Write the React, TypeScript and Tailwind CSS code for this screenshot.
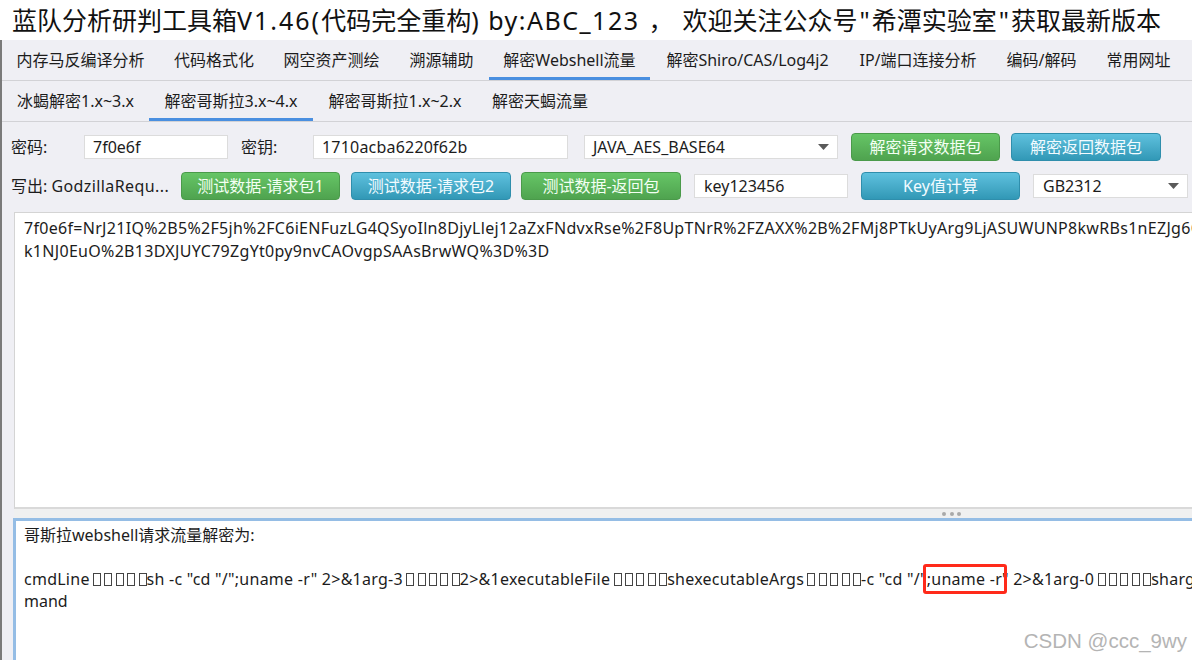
import React from 'react';

const mainTabs = [
  { label: '内存马反编译分析', w: 'w-[157px]' },
  { label: '代码格式化', w: 'w-[110px]' },
  { label: '网空资产测绘', w: 'w-[125px]' },
  { label: '溯源辅助', w: 'w-[95px]' },
  { label: '解密Webshell流量', w: 'w-[161px]', active: true },
  { label: '解密Shiro/CAS/Log4j2', w: 'w-[195px]' },
  { label: 'IP/端口连接分析', w: 'w-[146px]' },
  { label: '编码/解码', w: 'w-[101px]' },
  { label: '常用网址', w: 'w-[93px]' },
];

const subTabs = [
  { label: '冰蝎解密1.x~3.x', w: 'w-[147px]' },
  { label: '解密哥斯拉3.x~4.x', w: 'w-[164px]', active: true },
  { label: '解密哥斯拉1.x~2.x', w: 'w-[164px]' },
  { label: '解密天蝎流量', w: 'w-[126px]' },
];

// the missing-glyph boxes in the decoded output
const Tofu: React.FC<{ n?: number }> = ({ n = 5 }) => (
  <>
    {Array.from({ length: n }).map((_, i) => (
      <span key={i} className="inline-block w-[8px] h-[13px] border border-[#444] ml-[3.4px] align-[-1px]" />
    ))}
  </>
);

const Arrow = () => (
  <svg width="11" height="6" viewBox="0 0 11 6" className="shrink-0">
    <path d="M0 0 L11 0 L5.5 6 Z" fill="#5a5a5a" />
  </svg>
);

const GreenBtn: React.FC<{ w: string; children: React.ReactNode }> = ({ w, children }) => (
  <button className={`${w} h-[28px] shrink-0 rounded-[4px] border border-[#4a9a4a] bg-linear-to-b from-[#66c566] to-[#4fa34f] text-[16px] text-[#f3fff3] flex items-center justify-center`}>
    {children}
  </button>
);

const BlueBtn: React.FC<{ w: string; children: React.ReactNode }> = ({ w, children }) => (
  <button className={`${w} h-[28px] shrink-0 rounded-[4px] border border-[#2f8eac] bg-linear-to-b from-[#5ec1de] to-[#3198b6] text-[16px] text-[#f2fbff] flex items-center justify-center`}>
    {children}
  </button>
);

const App: React.FC = () => {
  return (
    <div className="relative w-[1192px] h-[660px] overflow-hidden bg-[#efeff4] text-[#1c1c1c] font-['Noto_Sans','Noto_Sans_CJK_SC',sans-serif]">
      {/* title */}
      <div className="h-[40px] bg-white pl-[12px] flex items-center text-[25px] leading-none whitespace-nowrap text-[#111]">
        蓝队分析研判工具箱<span className="tracking-[2px]">V1.46(</span>代码完全重构<span className="tracking-[1.5px]">) by:ABC_123</span>
        <span className="px-[9px]">，</span>
        欢迎关注公众号<span className="px-[2px]">"</span>希潭实验室<span className="px-[2px]">"</span>获取最新版本
      </div>

      <div className="flex h-[620px]">
        <div className="w-[2px] shrink-0 bg-[#7a7a7a]" />
        <div className="flex-1 min-w-0 flex flex-col">
          {/* main tabs */}
          <div className="flex h-[41px] border-b border-[#d2d2d6] text-[16px] whitespace-nowrap">
            {mainTabs.map((t) => (
              <div
                key={t.label}
                className={`${t.w} shrink-0 flex items-center justify-center border-b-[3px] pt-[3px] ${t.active ? 'border-[#4a8fe0]' : 'border-transparent'}`}
              >
                {t.label}
              </div>
            ))}
          </div>

          {/* sub tabs */}
          <div className="flex h-[41px] border-b border-[#d2d2d6] text-[16px] whitespace-nowrap">
            {subTabs.map((t) => (
              <div
                key={t.label}
                className={`${t.w} shrink-0 flex items-center justify-center border-b-[3px] pt-[2px] ${t.active ? 'border-[#4a8fe0]' : 'border-transparent'}`}
              >
                {t.label}
              </div>
            ))}
          </div>

          {/* row 1 */}
          <div className="flex items-center h-[28px] mt-[11px] pl-[9px] text-[16px] whitespace-nowrap">
            <span className="w-[73px] shrink-0">密码:</span>
            <div className="w-[144px] h-[24px] shrink-0 bg-white border border-[#dcdcdc] pl-[8px] flex items-center">7f0e6f</div>
            <span className="w-[72px] shrink-0 ml-[13px]">密钥:</span>
            <div className="w-[255px] h-[24px] shrink-0 bg-white border border-[#dcdcdc] pl-[8px] flex items-center tracking-[0.2px]">1710acba6220f62b</div>
            <div className="w-[254px] h-[24px] shrink-0 ml-[16px] bg-white border border-[#dcdcdc] pl-[8px] pr-[8px] flex items-center justify-between">
              <span>JAVA_AES_BASE64</span>
              <Arrow />
            </div>
            <div className="ml-[13px]"><GreenBtn w="w-[149px]">解密请求数据包</GreenBtn></div>
            <div className="ml-[11px]"><BlueBtn w="w-[150px]">解密返回数据包</BlueBtn></div>
          </div>

          {/* row 2 */}
          <div className="flex items-center h-[28px] mt-[11px] pl-[9px] text-[16px] whitespace-nowrap">
            <span className="w-[170px] shrink-0">写出: <span className="tracking-[0.4px]">GodzillaRequ...</span></span>
            <GreenBtn w="w-[159px]">测试数据-请求包1</GreenBtn>
            <div className="ml-[11px]"><BlueBtn w="w-[160px]">测试数据-请求包2</BlueBtn></div>
            <div className="ml-[10px]"><GreenBtn w="w-[160px]">测试数据-返回包</GreenBtn></div>
            <div className="w-[154px] h-[24px] shrink-0 ml-[13px] bg-white border border-[#dcdcdc] pl-[9px] flex items-center">key123456</div>
            <div className="ml-[13px]"><BlueBtn w="w-[159px]">Key值计算</BlueBtn></div>
            <div className="w-[155px] h-[24px] shrink-0 ml-[13px] bg-white border border-[#dcdcdc] pl-[9px] pr-[8px] flex items-center justify-between">
              <span>GB2312</span>
              <Arrow />
            </div>
          </div>

          {/* request textarea */}
          <div className="mt-[12px] ml-[12px] w-[1400px] h-[297px] shrink-0 bg-white border border-[#d4d4d4] border-b-2 border-b-[#d9d9d9] pl-[9px] pt-[4px] text-[16px] leading-[23px] tracking-[0.3px] whitespace-nowrap overflow-hidden">
            <div>7f0e6f=NrJ21IQ%2B5%2F5jh%2FC6iENFuzLG4QSyoIln8DjyLlej12aZxFNdvxRse%2F8UpTNrR%2FZAXX%2B%2FMj8PTkUyArg9LjASUWUNP8kwRBs1nEZJg6Q</div>
            <div>k1NJ0EuO%2B13DXJUYC79ZgYt0py9nvCAOvgpSAAsBrwWQ%3D%3D</div>
          </div>

          {/* splitter */}
          <div className="h-[9px] shrink-0 ml-[12px] bg-[#f0f0f0] flex items-center">
            <div className="ml-[928px] flex gap-[3.5px]">
              <span className="w-[4px] h-[4px] rounded-full bg-[#a9a9a9]" />
              <span className="w-[4px] h-[4px] rounded-full bg-[#a9a9a9]" />
              <span className="w-[4px] h-[4px] rounded-full bg-[#a9a9a9]" />
            </div>
          </div>

          {/* result textarea */}
          <div className="ml-[11px] w-[1400px] flex-1 bg-white border-t-[3px] border-l-[3px] border-[#95bde5] pl-[8px] pt-[3px] text-[16px] leading-[22px] whitespace-nowrap overflow-hidden">
            <div>哥斯拉webshell请求流量解密为:</div>
            <div className="h-[22px]" />
            <div className="tracking-[0.25px]">
              cmdLine<Tofu />sh -c "cd "/";uname -r" 2&gt;&amp;1arg-3<Tofu />2&gt;&amp;1executableFile<Tofu />shexecutableArgs<Tofu />-c "cd "/"<span className="relative">;uname -r<span className="absolute -left-[4px] -right-[5px] -top-[4px] -bottom-[4px] border-[3px] border-[#ff2a1a] rounded-[3px]" /></span>" 2&gt;&amp;1arg-0<Tofu />sharg
            </div>
            <div>mand</div>
          </div>
        </div>
      </div>

      {/* watermark */}
      <div className="absolute right-[5px] bottom-[9px] text-[20.5px] leading-none text-[#b4b4b4] font-['Liberation_Sans',sans-serif] [text-shadow:0_0_2px_#fff]">
        CSDN @ccc_9wy
      </div>
    </div>
  );
};

export default App;
